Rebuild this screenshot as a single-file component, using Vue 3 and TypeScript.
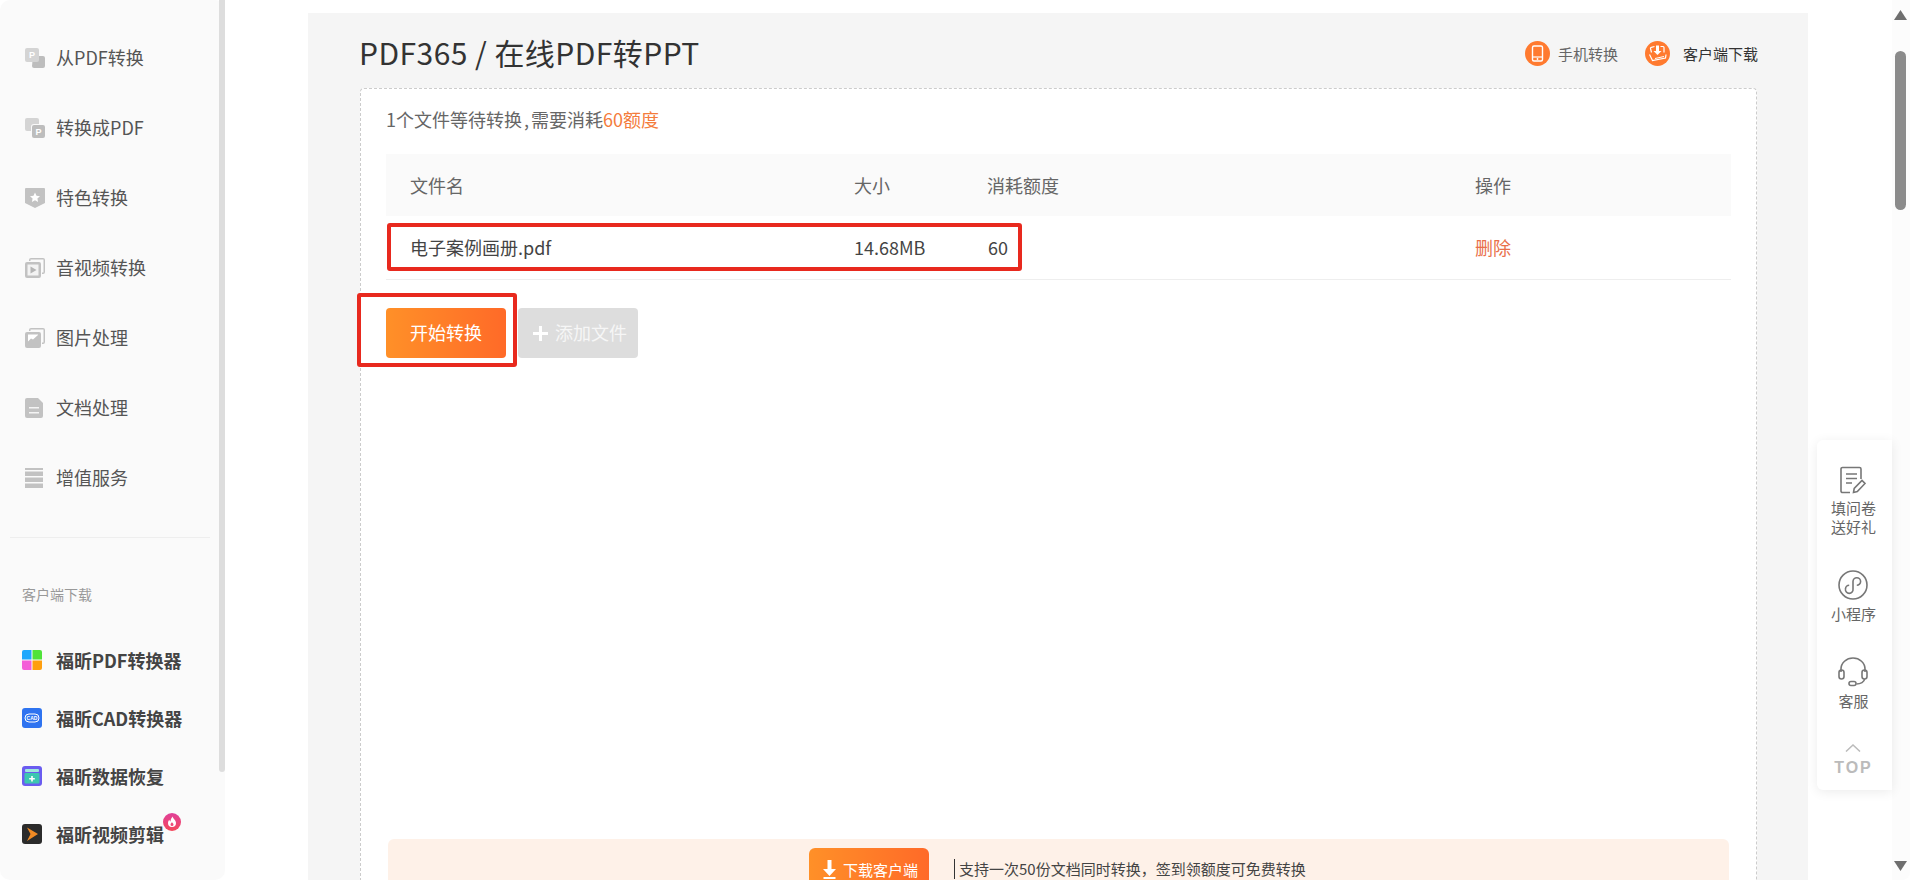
<script setup lang="ts">
interface Mark { x: number; y: number; t: string; size: number }
interface SideItem { label: string; paths: { d: string; fill: string }[]; mark?: Mark }

const grey = '#c2c2c2'
const pale = '#d4d4d4'

const sideItems: SideItem[] = [
  {
    label: '从PDF转换',
    paths: [
      { d: 'M8 8h10a2 2 0 0 1 2 2v8a2 2 0 0 1-2 2h-9a2 2 0 0 1-2-2z', fill: '#bdbdbd' },
      { d: 'M2 0h10a2 2 0 0 1 2 2v10a2 2 0 0 1-2 2H2a2 2 0 0 1-2-2V2a2 2 0 0 1 2-2z', fill: pale },
    ],
    mark: { x: 7, y: 10, t: 'P', size: 9 },
  },
  {
    label: '转换成PDF',
    paths: [
      { d: 'M2 0h10a2 2 0 0 1 2 2v4H9a3 3 0 0 0-3 3v4H2a2 2 0 0 1-2-2V2a2 2 0 0 1 2-2z', fill: pale },
      { d: 'M9 7h9a2 2 0 0 1 2 2v9a2 2 0 0 1-2 2H9a2 2 0 0 1-2-2V9a2 2 0 0 1 2-2z', fill: '#bdbdbd' },
    ],
    mark: { x: 13.5, y: 17, t: 'P', size: 9 },
  },
  {
    label: '特色转换',
    paths: [
      { d: 'M1 0h18a1 1 0 0 1 1 1v14l-10 5-10-5V1a1 1 0 0 1 1-1z', fill: grey },
      { d: 'M10 4.500l1.500 3.300 3.500.4-2.600 2.300.7 3.500-3.100-1.800-3.100 1.800.7-3.500L5 8.200l3.500-.4z', fill: '#fff' },
    ],
  },
  {
    label: '音视频转换',
    paths: [
      { d: 'M6 0h12a2 2 0 0 1 2 2v12a2 2 0 0 1-2 2h-1v-1.500h1.500V1.500H5.500V3H4V2a2 2 0 0 1 2-2z', fill: grey },
      { d: 'M2 4h12a2 2 0 0 1 2 2v12a2 2 0 0 1-2 2H2a2 2 0 0 1-2-2V6a2 2 0 0 1 2-2z', fill: grey },
      { d: 'M2.500 6.500h11v11h-11z', fill: '#f3f3f3' },
      { d: 'M5.500 8.500l6 3.500-6 3.500z', fill: '#b5b5b5' },
    ],
  },
  {
    label: '图片处理',
    paths: [
      { d: 'M6 0h12a2 2 0 0 1 2 2v12a2 2 0 0 1-2 2h-1v-1.500h1.500V1.500H5.500V3H4V2a2 2 0 0 1 2-2z', fill: grey },
      { d: 'M2 4h12a2 2 0 0 1 2 2v12a2 2 0 0 1-2 2H2a2 2 0 0 1-2-2V6a2 2 0 0 1 2-2z', fill: grey },
      { d: 'M3 13.500l3-3 2 1 5-4.500V6.500H3z', fill: '#fff' },
    ],
  },
  {
    label: '文档处理',
    paths: [
      { d: 'M2 0h11l5 5v13a2 2 0 0 1-2 2H2a2 2 0 0 1-2-2V2a2 2 0 0 1 2-2z', fill: grey },
      { d: 'M4 9h10v1.500H4zM4 14h10v1.500H4z', fill: '#f4f4f4' },
    ],
  },
  {
    label: '增值服务',
    paths: [
      { d: 'M0 0h18v2H0zM0 3.500h18V8H0zM0 9.500h18V14H0zM0 15.500h18V20H0z', fill: grey },
    ],
  },
]

const products = ['福昕PDF转换器', '福昕CAD转换器', '福昕数据恢复', '福昕视频剪辑']
</script>

<template>
  <div class="page">
    <aside class="side">
      <ul class="side-list">
        <li v-for="item in sideItems" :key="item.label" class="side-item">
          <svg class="side-icon" viewBox="0 0 20 20" width="20" height="20">
            <path v-for="p in item.paths" :key="p.d" :d="p.d" :fill="p.fill" />
            <text v-if="item.mark" :x="item.mark.x" :y="item.mark.y" :font-size="item.mark.size"
                  text-anchor="middle" fill="#fff" class="icon-mark">{{ item.mark.t }}</text>
          </svg>
          <span class="lift">{{ item.label }}</span>
        </li>
      </ul>
      <div class="side-line"></div>
      <div class="side-sub">客户端下载</div>
      <ul class="prod-list">
        <li v-for="(name, i) in products" :key="name" class="prod-item">
          <svg v-if="i === 0" class="prod-icon" viewBox="0 0 20 20" width="20" height="20">
            <path d="M2 0h7.500v9.500H0V2a2 2 0 0 1 2-2z" fill="#1ea7fd" />
            <path d="M10.500 0H18a2 2 0 0 1 2 2v7.500h-9.500z" fill="#4fe33a" />
            <path d="M0 10.500h9.500V20H2a2 2 0 0 1-2-2z" fill="#f45fd8" />
            <path d="M10.500 10.500H20V18a2 2 0 0 1-2 2h-7.500z" fill="#ff9f0f" />
          </svg>
          <svg v-else-if="i === 1" class="prod-icon" viewBox="0 0 20 20" width="20" height="20">
            <rect width="20" height="20" rx="3" fill="#2e73f0" />
            <rect x="3" y="6" width="14" height="8" rx="4" fill="none" stroke="#fff" stroke-width="1" />
            <text x="10" y="11.800" font-size="5" text-anchor="middle" fill="#fff" class="icon-mark">CAD</text>
          </svg>
          <svg v-else-if="i === 2" class="prod-icon" viewBox="0 0 20 20" width="20" height="20">
            <rect width="20" height="20" rx="3" fill="#6a5cf0" />
            <rect x="3" y="3" width="14" height="3" rx="1" fill="#9fe9dc" />
            <rect x="2.500" y="7" width="15" height="10.500" rx="1" fill="#3cc7b0" />
            <path d="M9.200 10h1.600v2h2v1.600h-2v2H9.200v-2h-2V12h2z" fill="#fff" />
          </svg>
          <svg v-else class="prod-icon" viewBox="0 0 20 20" width="20" height="20">
            <rect width="20" height="20" rx="3" fill="#2b2b2b" />
            <path d="M5 3.500l11 6.500-11 7 3.500-7z" fill="#f08a24" />
          </svg>
          <span>{{ name }}</span>
          <svg v-if="i === 3" class="fire" viewBox="0 0 18 18" width="18" height="18">
            <defs>
              <linearGradient id="fireBg" x1="0" y1="0" x2="0" y2="1">
                <stop offset="0" stop-color="#e0409a" />
                <stop offset="1" stop-color="#f4475a" />
              </linearGradient>
            </defs>
            <circle cx="9" cy="9" r="9" fill="url(#fireBg)" />
            <path d="M9.500 3.500c.500 2 3.500 3.500 3.500 6.500a4 4 0 0 1-8 0c0-1.500.700-2.500 1.500-3.200 0 1 .500 1.500 1 1.700 0-2 1-3.500 2-5z" fill="#fff" />
            <path d="M9 9c.300 1 1.500 1.500 1.500 2.500a1.500 1.500 0 0 1-3 0c0-1 1-1.500 1.500-2.500z" fill="#ee4a78" />
          </svg>
        </li>
      </ul>
      <div class="side-bar"></div>
    </aside>

    <main class="main">
      <section class="panel">
        <header class="head">
          <h1 class="title">PDF365 / 在线PDF转PPT</h1>
          <div class="head-links">
            <a class="head-link">
              <svg viewBox="0 0 25 25" width="25" height="25">
                <circle cx="12.500" cy="12.500" r="12.500" fill="#ff7a2f" />
                <rect x="7.500" y="5" width="10" height="15" rx="1.500" fill="none" stroke="#fff" stroke-width="1.400" />
                <path d="M7.500 16h10" stroke="#fff" stroke-width="1.200" />
                <circle cx="12.500" cy="18" r=".9" fill="#fff" />
              </svg>
              <span>手机转换</span>
            </a>
            <a class="head-link dark">
              <svg viewBox="0 0 25 25" width="25" height="25">
                <circle cx="12.500" cy="12.500" r="12.500" fill="#ff7a2f" />
                <path d="M6.500 11.500l-1-4a1 1 0 0 1 .8-1.200L9.500 5.500M15.500 5.500H18a1 1 0 0 1 1 1v5" fill="none" stroke="#fff" stroke-width="1.200" />
                <path d="M11 4.500h3v5.500h2.500l-4 4-4-4H11z" fill="#fff" />
                <path d="M4.500 13.500l3 6 13-2.500 .5-3.500" fill="none" stroke="#fff" stroke-width="1.200" />
                <path d="M10 17.500l9-2" stroke="#fff" stroke-width="1" />
              </svg>
              <span>客户端下载</span>
            </a>
          </div>
        </header>

        <div class="card">
          <p class="summary">1个文件等待转换 , 需要消耗<em>60额度</em></p>
          <div class="table">
            <div class="tr th">
              <span>文件名</span><span>大小</span><span>消耗额度</span><span>操作</span>
            </div>
            <div class="tr td">
              <span>电子案例画册.pdf</span><span>14.68MB</span><span class="num">60</span><a class="del">删除</a>
              <i class="mark mark-row"></i>
            </div>
          </div>
          <div class="actions">
            <button class="btn start">开始转换</button>
            <button class="btn add"><b class="plus"></b>添加文件</button>
            <i class="mark mark-btn"></i>
          </div>
          <div class="spacer"></div>
          <div class="promo">
            <button class="promo-btn">
              <svg viewBox="0 0 15 19" width="15" height="19">
                <path d="M5.500 0h4v9h4.500l-6.500 7-6.500-7h4.500zM1.500 17h12v2h-12z" fill="#fff" />
              </svg>
              下载客户端
            </button>
            <div class="promo-text">支持一次50份文档同时转换，签到领额度可免费转换</div>
          </div>
        </div>
      </section>

      <nav class="float">
        <div class="float-item first">
          <svg viewBox="0 0 26 28" width="26" height="28">
            <path d="M21 13V3a1.500 1.500 0 0 0-1.500-1.500h-17A1.500 1.500 0 0 0 1 3v22a1.500 1.500 0 0 0 1.500 1.500H10" fill="none" stroke="#777" stroke-width="1.600" />
            <path d="M6 8h11M6 12.500h11M6 17h6" stroke="#777" stroke-width="1.600" />
            <path d="M13.500 26.500l.7-4L22 14.500l3 3-7.700 8z" fill="none" stroke="#777" stroke-width="1.600" />
          </svg>
          <span>填问卷<br />送好礼</span>
        </div>
        <div class="float-item">
          <svg viewBox="0 0 30 30" width="30" height="30">
            <circle cx="15" cy="15" r="14" fill="none" stroke="#777" stroke-width="1.600" />
            <path d="M7.500 19a3.800 3.800 0 1 0 7.500 0v-7.500a3.800 3.800 0 1 1 3.800 3.800M11.200 15.200A3.800 3.800 0 0 0 7.500 19" fill="none" stroke="#777" stroke-width="1.600" />
          </svg>
          <span>小程序</span>
        </div>
        <div class="float-item">
          <svg viewBox="0 0 30 30" width="30" height="30">
            <path d="M3 15v-3a12 11 0 0 1 24 0v3" fill="none" stroke="#777" stroke-width="1.600" />
            <rect x="1" y="13" width="5" height="9" rx="2.500" fill="none" stroke="#777" stroke-width="1.600" />
            <rect x="24" y="13" width="5" height="9" rx="2.500" fill="none" stroke="#777" stroke-width="1.600" />
            <path d="M26.500 22c0 3-4 5-8 5" fill="none" stroke="#777" stroke-width="1.600" />
            <rect x="11" y="24.500" width="7" height="4" rx="2" fill="none" stroke="#777" stroke-width="1.600" />
          </svg>
          <span>客服</span>
        </div>
        <div class="float-top">
          <svg viewBox="0 0 16 8" width="16" height="8">
            <path d="M1 7.500l7-6.500 7 6.500" fill="none" stroke="#bbb" stroke-width="1.500" />
          </svg>
          <span>TOP</span>
        </div>
      </nav>
    </main>

    <div class="scroll">
      <svg class="arrow" viewBox="0 0 13 10" width="13" height="10"><path d="M6.500 0L13 10H0z" fill="#6e6e6e" /></svg>
      <div class="thumb"></div>
      <svg class="arrow last" viewBox="0 0 13 10" width="13" height="10"><path d="M0 0h13L6.500 10z" fill="#6e6e6e" /></svg>
    </div>
  </div>
</template>

<style>
html, body {
  margin: 0;
  background: #fff;
  overflow: hidden;
}
</style>

<style scoped>
.page {
  display: flex;
  height: 880px;
  overflow: hidden;
  font-family: "Noto Sans CJK SC", "Liberation Sans", sans-serif;
  font-weight: 400;
  color: #555;
}
.side {
  position: relative;
  flex: none;
  width: 225px;
  height: 880px;
  box-sizing: border-box;
  background: #fafafa;
  border-radius: 10px;
  padding-top: 23px;
}
.side-list, .prod-list {
  list-style: none;
  margin: 0;
  padding: 0;
}
.side-item {
  display: flex;
  align-items: center;
  height: 70px;
  padding-left: 25px;
  font-size: 18px;
  color: #555;
}
.lift {
  padding-bottom: 2px;
}
.side-icon {
  margin-right: 11px;
  flex: none;
}
.icon-mark {
  font-family: "Liberation Sans", sans-serif;
  font-weight: 700;
}
.side-line {
  height: 1px;
  background: #eee;
  margin: 24px 15px 0 10px;
}
.side-sub {
  margin: 46px 0 0 22px;
  font-size: 14px;
  line-height: 20px;
  color: #999;
}
.prod-list {
  margin-top: 27px;
}
.prod-item {
  position: relative;
  display: flex;
  align-items: center;
  height: 58px;
  padding-left: 22px;
  font-size: 18px;
  font-weight: 700;
  color: #444;
}
.prod-icon {
  margin-right: 14px;
  flex: none;
}
.fire {
  position: absolute;
  left: 163px;
  top: 8px;
}
.side-bar {
  position: absolute;
  right: 0;
  top: 0;
  width: 6px;
  height: 772px;
  background: #ddd;
  border-radius: 0 0 3px 3px;
}
.main {
  position: relative;
  flex: 1;
  min-width: 0;
  padding: 13px 0 0 83px;
  box-sizing: border-box;
}
.panel {
  width: 1500px;
  height: 867px;
  box-sizing: border-box;
  background: #f5f5f5;
  padding: 0 51px 0 52px;
}
.head {
  display: flex;
  align-items: center;
  justify-content: space-between;
  height: 75px;
  padding-top: 3px;
  box-sizing: border-box;
}
.title {
  margin: 0 0 0 -1px;
  font-size: 30px;
  font-weight: 400;
  letter-spacing: 0.45px;
  color: #333;
}
.head-links {
  display: flex;
  gap: 27px;
  margin-right: -1px;
  padding-top: 2px;
}
.head-link {
  display: flex;
  align-items: center;
  font-size: 15px;
  color: #666;
}
.head-link svg {
  margin-right: 8px;
}
.head-link.dark {
  color: #333;
}
.head-link.dark svg {
  margin-right: 13px;
}
.card {
  display: flex;
  flex-direction: column;
  height: 792px;
  box-sizing: border-box;
  background: #fff;
  border: 1px dashed #ccc;
  border-bottom: 0;
  border-radius: 4px 4px 0 0;
  padding: 0 25px;
}
.summary {
  margin: 0;
  height: 65px;
  line-height: 60px;
  font-size: 18px;
  color: #666;
  word-spacing: -2px;
}
.summary em {
  font-style: normal;
  color: #f47c3c;
}
.tr {
  position: relative;
  display: grid;
  grid-template-columns: 444px 133px 488px 1fr;
  align-items: center;
  padding-left: 24px;
  font-size: 18px;
}
.th {
  height: 62px;
  background: #fafafa;
  color: #666;
}
.td {
  height: 63px;
  color: #444;
  border-bottom: 1px solid #eee;
}
.td > span, .td > a {
  padding-bottom: 2px;
}
.num {
  margin-left: 1px;
}
.del {
  color: #e96f4a;
}
.mark {
  position: absolute;
  box-sizing: border-box;
  border: 4px solid #e8291e;
  border-radius: 3px;
}
.mark-row {
  left: 1px;
  top: 7px;
  width: 635px;
  height: 48px;
}
.actions {
  position: relative;
  display: flex;
  gap: 12px;
  margin-top: 28px;
}
.btn {
  width: 120px;
  height: 50px;
  border: 0;
  border-radius: 4px;
  color: #fff;
  font: inherit;
  font-size: 18px;
  display: flex;
  align-items: center;
  justify-content: center;
  padding: 0 0 2px;
}
.start {
  background: linear-gradient(to right, #ff9028, #ff6a28);
}
.add {
  background: #ddd;
  color: #f6f6f6;
  padding-left: 4px;
}
.plus {
  width: 15px;
  height: 15px;
  margin: 2px 7px 0 0;
  background:
    linear-gradient(#fff, #fff) center / 15px 3px no-repeat,
    linear-gradient(#fff, #fff) center / 3px 15px no-repeat;
}
.mark-btn {
  left: -29px;
  top: -15px;
  width: 160px;
  height: 74px;
}
.spacer {
  flex: 1;
}
.promo {
  flex: none;
  display: flex;
  margin: 0 2px;
  padding-top: 9px;
  height: 32px;
  background: #fef1e8;
  border-radius: 6px 6px 0 0;
  padding-left: 421px;
}
.promo-btn {
  flex: none;
  display: flex;
  align-items: center;
  justify-content: center;
  gap: 6px;
  width: 120px;
  height: 42px;
  padding: 0 0 0 2px;
  border: 0;
  border-radius: 6px 6px 0 0;
  background: linear-gradient(to right, #ff9028, #ff6a28);
  color: #fff;
  font: inherit;
  font-size: 15px;
}
.promo-text {
  margin: 11px 0 0 25px;
  height: 20px;
  padding-left: 4px;
  border-left: 1px solid #333;
  font-size: 15px;
  line-height: 20px;
  color: #444;
}
.float {
  position: absolute;
  right: 0;
  top: 440px;
  width: 75px;
  height: 350px;
  box-sizing: border-box;
  padding-right: 2px;
  background: #fff;
  border-radius: 6px 0 0 6px;
  box-shadow: 0 2px 12px rgba(0, 0, 0, 0.08);
  display: flex;
  flex-direction: column;
  align-items: center;
  font-size: 15px;
  line-height: 19px;
  color: #666;
}
.float-item {
  display: flex;
  flex-direction: column;
  align-items: center;
  text-align: center;
  margin-top: 34px;
}
.float-item.first {
  margin-top: 26px;
}
.float-item svg {
  margin-bottom: 4px;
}
.float-top {
  display: flex;
  flex-direction: column;
  align-items: center;
  margin-top: 34px;
  color: #bbb;
  font-family: "Liberation Sans", sans-serif;
  font-weight: 700;
  font-size: 16px;
  letter-spacing: 2px;
  line-height: 17px;
}
.float-top svg {
  margin-bottom: 7px;
}
.scroll {
  flex: none;
  display: flex;
  flex-direction: column;
  width: 18px;
  height: 880px;
  box-sizing: border-box;
  padding: 10px 3px 9px 2px;
  background: #fcfcfc;
  border-radius: 0 0 8px 0;
}
.arrow {
  flex: none;
  display: block;
}
.arrow.last {
  margin-top: auto;
}
.thumb {
  flex: none;
  width: 11px;
  height: 159px;
  margin: 31px 0 0 1px;
  background: #8b8b8b;
  border-radius: 6px;
}
</style>
